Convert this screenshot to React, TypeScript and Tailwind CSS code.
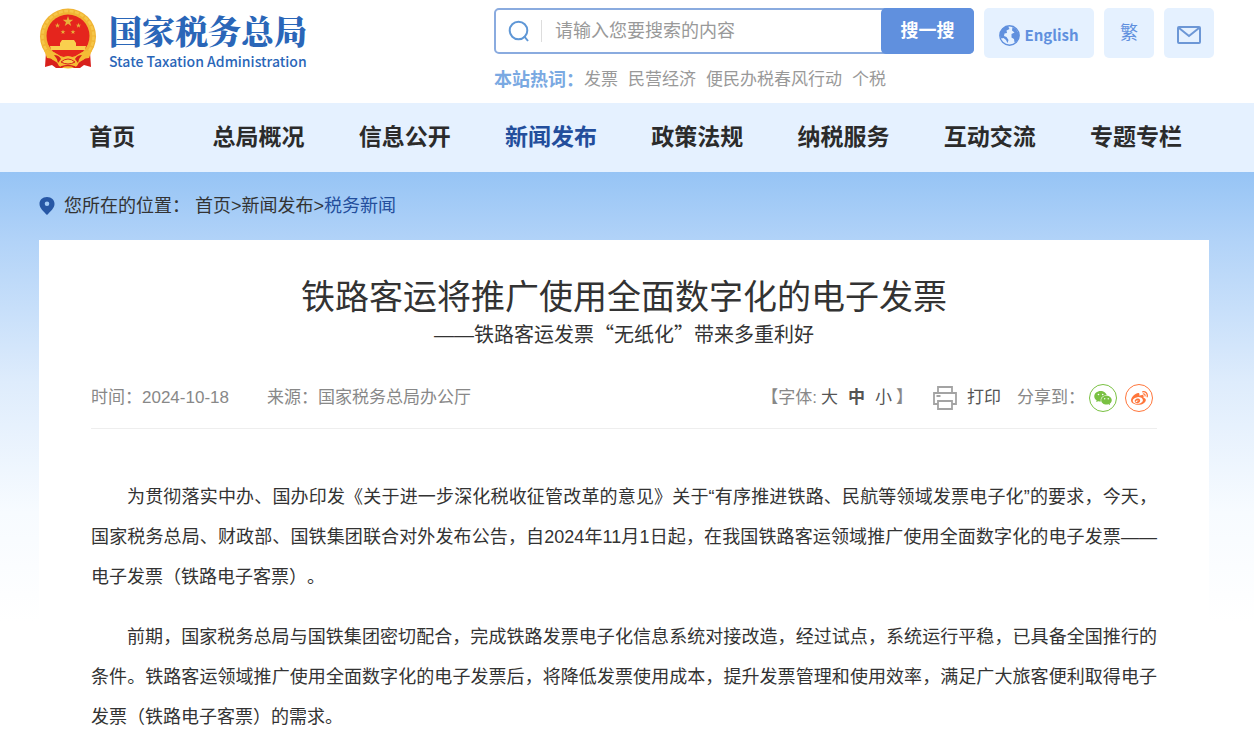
import * as React from "react"
import { AiFillWechat } from "react-icons/ai"
import { FaWeibo } from "react-icons/fa6"

const navItems = ["首页", "总局概况", "信息公开", "新闻发布", "政策法规", "纳税服务", "互动交流", "专题专栏"]
const hotWords = ["发票", "民营经济", "便民办税春风行动", "个税"]

const paragraphs = [
  "为贯彻落实中办、国办印发《关于进一步深化税收征管改革的意见》关于“有序推进铁路、民航等领域发票电子化”的要求，今天，国家税务总局、财政部、国铁集团联合对外发布公告，自2024年11月1日起，在我国铁路客运领域推广使用全面数字化的电子发票——电子发票（铁路电子客票）。",
  "前期，国家税务总局与国铁集团密切配合，完成铁路发票电子化信息系统对接改造，经过试点，系统运行平稳，已具备全国推行的条件。铁路客运领域推广使用全面数字化的电子发票后，将降低发票使用成本，提升发票管理和使用效率，满足广大旅客便利取得电子发票（铁路电子客票）的需求。",
]

const star = "M0 -1 L0.23 -0.31 L0.95 -0.31 L0.37 0.12 L0.59 0.81 L0 0.39 L-0.59 0.81 L-0.37 0.12 L-0.95 -0.31 L-0.23 -0.31 Z"

function Emblem() {
  return (
    <svg width="58" height="62" viewBox="0 0 58 62" aria-hidden="true">
      <path d="M7 44 L6 59 L13 57 L17 60 L41 60 L45 57 L52 59 L51 44 Z" fill="#d8201c" />
      <circle cx="29" cy="28.500" r="28" fill="#f0b434" />
      <circle cx="29" cy="28.500" r="25.500" fill="none" stroke="#f6c648" strokeWidth="2.500" strokeDasharray="4 1.500" />
      <circle cx="29" cy="28" r="21.500" fill="#e5251d" />
      <g fill="#e9b13a">
        <path d={star} transform="translate(29 13.500) scale(5.5)" />
        <path d={star} transform="translate(18.500 17.500) scale(2.8)" />
        <path d={star} transform="translate(39.500 17.500) scale(2.8)" />
        <path d={star} transform="translate(24 24) scale(2.6)" />
        <path d={star} transform="translate(34 24) scale(2.6)" />
      </g>
      <path d="M23 32 h12 l2 3 h-16 Z M21 35 h16 v3 h-16 Z M11 38 h36 l-1 4 h-34 Z" fill="#f9cf4e" />
      <path d="M5 42 Q17 43 23 50 Q29 46 35 50 Q41 43 53 42 L50 50 Q42 50 38 58 Q29 63 20 58 Q16 50 8 50 Z" fill="#f5bd35" />
      <path d="M15 47 Q20 47 22 51 L19 55 Q18 50 15 47 Z M43 47 Q38 47 36 51 L39 55 Q40 50 43 47 Z" fill="#d8201c" />
      <path d="M22 54 Q29 48 36 54 Q29 58 22 54 Z" fill="#f9cf4e" stroke="#d8201c" strokeWidth="1" />
      <path d="M22 59 Q29 56 36 59" fill="none" stroke="#d8201c" strokeWidth="1.500" />
    </svg>
  )
}

function GlobeIcon() {
  return (
    <svg width="21" height="21" viewBox="0 0 21 21" aria-hidden="true">
      <circle cx="10.500" cy="10.500" r="9.700" fill="none" stroke="#6090de" strokeWidth="1.400" />
      <path d="M9 1 C4 2 1 5 1 10 C1 12 2 13 2.500 13.500 L4.500 13 L7 15 L8.500 18 L9.500 15 L7.500 12 L5 11 L5.500 8.500 L8 8 L7.500 5.500 L10.500 4 Z" fill="#6090de" />
      <path d="M13.500 2 L17 4 L20 9 L20 13 L17.500 16.500 L15.500 17.500 L15 14 L12.500 12.500 L12.500 9 L15.500 7.500 L13 5.500 Z" fill="#6090de" />
    </svg>
  )
}

function PrinterIcon() {
  return (
    <svg width="24" height="24" viewBox="0 0 24 24" fill="none" stroke="#a3a3a3" strokeWidth="1.800" aria-hidden="true">
      <path d="M5 7 V1 H19 V7 M5 18 H1 V7 H23 V18 H19 M5 15 H19 V23 H5 Z M3.500 10 H7.500" />
    </svg>
  )
}

function Header() {
  return (
    <header className="flex h-[103px] items-start justify-between pt-2 pr-10 pl-[39px]">
      <a href="#" className="flex gap-3 text-[#2a66b8]">
        <Emblem />
        <div className="flex flex-col gap-1 pt-1">
          <span className="font-['Noto_Serif_CJK_SC','Noto_Sans_CJK_SC',serif] text-[33px] leading-9 font-black">国家税务总局</span>
          <span className="font-['Noto_Sans_CJK_SC',sans-serif] text-sm leading-[18px] font-medium">State Taxation Administration</span>
        </div>
      </a>
      <div>
        <div className="flex gap-[10px]">
          <form className="flex h-[46px] w-[480px] items-center rounded-[5px] border-2 border-[#8aabdf]">
            <label htmlFor="search" className="flex items-center pl-3">
              <svg width="22" height="22" viewBox="0 0 22 22" fill="none" stroke="#5f97d6" strokeWidth="2" aria-label="搜索">
                <circle cx="10.500" cy="10.500" r="8.800" />
                <path d="M16 16 L20 21" />
              </svg>
              <span className="ml-[11px] h-[22px] w-px bg-[#dddddd]" />
            </label>
            <input
              id="search"
              type="text"
              placeholder="请输入您要搜索的内容"
              className="min-w-0 flex-1 px-[13px] text-lg outline-none placeholder:text-[#999999]"
            />
            <button type="button" className="-mr-[2px] h-[46px] w-[93px] rounded-[5px] bg-[#6090de] text-lg font-bold text-white">
              搜一搜
            </button>
          </form>
          <a href="#" className="flex h-[50px] w-[110px] items-center justify-center gap-1 rounded-[5px] bg-[#e5f1ff] pt-1 font-['Noto_Sans_CJK_SC',sans-serif] text-[15px] font-bold text-[#6090de]">
            <GlobeIcon />
            English
          </a>
          <a href="#" className="flex h-[50px] w-[50px] items-center justify-center rounded-[5px] bg-[#e5f1ff] text-lg text-[#6090de]">
            繁
          </a>
          <a href="#" aria-label="邮箱" className="flex h-[50px] w-[50px] items-center justify-center rounded-[5px] bg-[#e5f1ff] pt-1">
            <svg width="24" height="18" viewBox="0 0 24 18" fill="none" stroke="#6c97d6" strokeWidth="2">
              <rect x="1" y="1" width="22" height="16" rx="1" />
              <path d="M2 2 L12 10 L22 2" />
            </svg>
          </a>
        </div>
        <div className="mt-[10px] flex items-center text-[17px] leading-6 text-[#999999]">
          <span className="text-lg leading-6 font-bold text-[#7aa9e2]">本站热词：</span>
          <div className="flex gap-[10px]">
            {hotWords.map((word) => (
              <a key={word} href="#">{word}</a>
            ))}
          </div>
        </div>
      </div>
    </header>
  )
}

function Navigation() {
  return (
    <nav className="grid h-[69px] grid-cols-8 items-center bg-[#e5f1ff] pr-[45px] pl-[39px] text-center text-[23px] font-bold text-[#2b2b2b]">
      {navItems.map((item) => (
        <a key={item} href="#" className={item === "新闻发布" ? "text-[#234e9c]" : ""}>
          {item}
        </a>
      ))}
    </nav>
  )
}

function ArticleMeta() {
  return (
    <div className="flex items-center justify-between border-b border-[#eeeeee] pb-4 text-[17px] leading-7 text-[#888888]">
      <div className="flex gap-[38px]">
        <span>时间：2024-10-18</span>
        <span>来源：国家税务总局办公厅</span>
      </div>
      <div className="flex items-center pr-1">
        <span>【字体:</span>
        <button type="button" className="ml-1 text-[#555555]">大</button>
        <button type="button" className="ml-[10px] font-bold text-[#555555]">中</button>
        <button type="button" className="ml-[10px] text-[#555555]">小</button>
        <span className="ml-1">】</span>
        <button type="button" className="ml-5 flex items-center gap-[10px] text-[#555555]">
          <PrinterIcon />
          打印
        </button>
        <span className="ml-4">分享到：</span>
        <a href="#" aria-label="微信" className="ml-1 flex size-7 items-center justify-center rounded-full border border-[#7ac143] text-[#7ac143]">
          <AiFillWechat size={20} />
        </a>
        <a href="#" aria-label="微博" className="ml-2 flex size-7 items-center justify-center rounded-full border border-[#ff763b] text-[#ff763b]">
          <FaWeibo size={17} />
        </a>
      </div>
    </div>
  )
}

export default function App() {
  return (
    <div className="bg-white font-['Liberation_Sans','Noto_Sans_CJK_SC',sans-serif] text-[#333333] [text-spacing-trim:space-all]">
      <Header />
      <Navigation />
      <main className="bg-[linear-gradient(to_bottom,#96c4f5_0px,#b2d3f8_70px,#deecfc_210px,#f7fbff_340px,#ffffff_450px)] pr-[45px] pl-[39px]">
        <div className="flex h-[68px] items-center text-lg">
          <svg width="16" height="18" viewBox="0 0 16 18" className="mr-[9px]" aria-hidden="true">
            <path fillRule="evenodd" d="M8 0 C3.400 0 0.500 3.200 0.500 7 C0.500 11 4.500 14.500 8 18 C11.500 14.500 15.500 11 15.500 7 C15.500 3.200 12.600 0 8 0 Z M8 4.500 A2.300 2.300 0 1 1 8 9.100 A2.300 2.300 0 1 1 8 4.500 Z" fill="#2757a5" />
          </svg>
          <span className="mr-[5px]">您所在的位置：</span>
          <a href="#">首页</a>&gt;<a href="#">新闻发布</a>&gt;<a href="#" className="text-[#234e9c]">税务新闻</a>
        </div>
        <article className="bg-white px-[52px] pt-9 pb-5">
          <h1 className="text-center text-[34px] leading-[42px]">铁路客运将推广使用全面数字化的电子发票</h1>
          <p className="mb-[33px] text-center text-xl leading-8">
            ——<span className="font-['Noto_Sans_CJK_SC',sans-serif]">铁路客运发票“无纸化”带来多重利好</span>
          </p>
          <ArticleMeta />
          <div className="mt-12 flex flex-col gap-5">
            {paragraphs.map((text) => (
              <p key={text} className="text-justify indent-9 text-lg leading-10">{text}</p>
            ))}
          </div>
        </article>
      </main>
    </div>
  )
}
